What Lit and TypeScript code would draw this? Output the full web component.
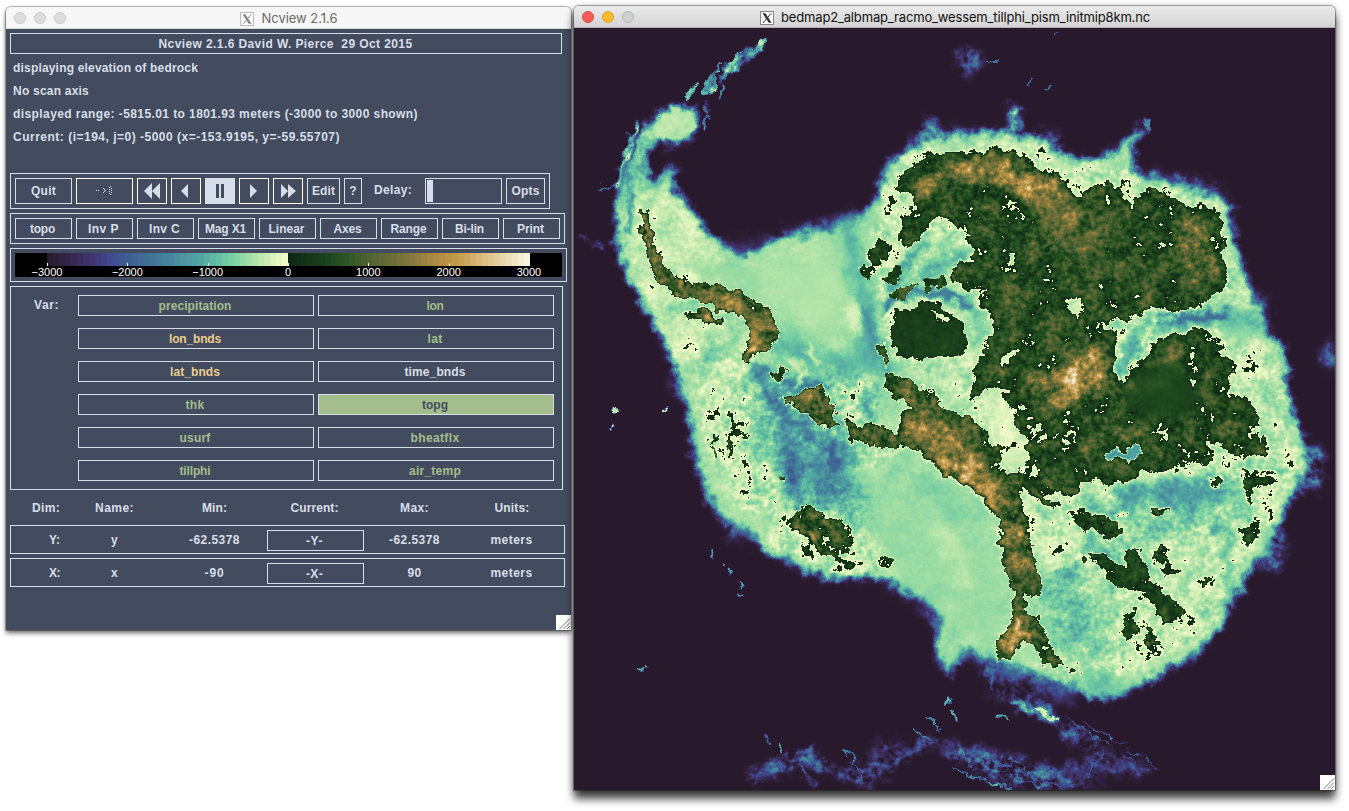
import { LitElement, html, svg, css } from "lit";
import { customElement, property } from "lit/decorators.js";

const UI_FONT = 'bold 12px "Liberation Sans"';
const pen = document.createElement("canvas").getContext("2d")!;

function spacing(text: string, width: number, font: string): number {
  pen.font = font;
  return (width - pen.measureText(text).width) / Math.max(1, text.length);
}
const label = (text: string, width: number, font = UI_FONT) =>
  html`<span class="label" style="letter-spacing:${spacing(text, width, font).toFixed(3)}px">${text}</span>`;

/* ---------- colour map: metres -> rgb ---------- */
type Stop = [number, number, number, number];
const SEA: Stop[] = [
  [-3000, 40, 26, 44], [-2700, 53, 39, 76], [-2400, 65, 56, 116], [-2200, 64, 74, 145],
  [-2000, 62, 94, 148], [-1700, 65, 115, 151], [-1400, 73, 140, 158], [-1100, 82, 166, 162],
  [-900, 96, 188, 163], [-700, 122, 208, 163], [-500, 158, 221, 164], [-300, 198, 234, 176], [0, 250, 253, 205],
];
const LAND: Stop[] = [
  [0, 13, 37, 20], [300, 23, 57, 26], [600, 34, 78, 31], [850, 62, 92, 43], [1100, 88, 102, 52],
  [1500, 128, 118, 60], [1850, 172, 140, 66], [2050, 192, 150, 70], [2350, 214, 182, 118], [3000, 249, 251, 228],
];
function colourAt(m: number): [number, number, number] {
  const stops = m < 0 ? SEA : LAND;
  for (let i = 1; i < stops.length; i++) {
    if (m <= stops[i][0] || i === stops.length - 1) {
      const a = stops[i - 1], b = stops[i];
      const t = Math.min(1, (m - a[0]) / (b[0] - a[0]));
      return [1, 2, 3].map((k) => a[k] + (b[k] - a[k]) * t) as [number, number, number];
    }
  }
  return [0, 0, 0];
}
const RAMP = Array.from({ length: 256 }, (_, i) => colourAt((i / 255) * 6000 - 3000));
const table = (k: number) => RAMP.map((c) => (c[k] / 255).toFixed(3)).join(" ");
const barGradient = (() => {
  const n = 80;
  return Array.from({ length: n }, (_, i) => {
    const c = colourAt(((i + 0.5) / n) * 6000 - 3000).map(Math.round);
    return `rgb(${c}) ${(i / n) * 100}% ${((i + 1) / n) * 100}%`;
  }).join(",");
})();

/* ---------- elevation field: red = height, green and blue = roughness ---------- */
const tone = (m: number, rough: number) => {
  const h = Math.round(((m + 3000) / 6000) * 255);
  const r = Math.round(rough * 255);
  return `rgb(${h},${r},${r})`;
};
/** [points, metres, roughness, blur] */
type Area = [string, number, number, number];
/** [path, metres, roughness, stroke width, blur] */
type Line = [string, number, number, number, number];

const SHELF =
  "655,118 668,108 682,107 696,110 697,128 688,140 672,146 655,140 646,146 645,170 655,181 672,168 675,190 690,205 700,222 718,242 740,256 762,246 785,236 830,228 855,220 872,206 880,188 886,165 905,152 930,139 960,133 1000,133 1036,136 1052,152 1078,158 1106,157 1124,142 1136,126 1142,130 1132,152 1135,172 1160,180 1190,188 1215,196 1230,206 1234,235 1242,262 1252,295 1264,325 1285,352 1288,385 1292,412 1304,440 1309,462 1298,486 1282,515 1272,545 1250,572 1236,592 1222,625 1200,652 1165,672 1140,686 1115,698 1085,698 1070,684 1045,678 1010,668 992,656 962,648 958,664 948,674 936,655 938,628 942,612 925,598 905,590 880,579 830,578 800,570 778,556 760,550 748,530 728,526 714,508 702,480 693,450 688,415 681,388 672,362 667,340 650,318 638,296 625,270 617,245 617,212 620,185 628,162 638,138";
const GRAY_SEA: Area[] = [
  ["655,118 672,109 694,112 694,128 684,139 668,142 655,134", -330, 0.1, 2],
  ["638,195 665,190 690,222 725,262 745,330 720,370 680,370 655,310 628,262 622,215", -280, 0.22, 6],
  ["740,265 830,240 855,250 850,330 820,370 780,340 770,300", -420, 0.04, 10],
  ["680,260 745,265 770,290 740,290 700,275", -500, 0.05, 5],
  ["890,165 930,145 1000,140 1040,145 1060,165 1110,165 1150,188 1215,202 1230,260 1255,315 1280,370 1295,440 1300,465 1270,520 1240,570 1215,625 1160,665 1100,680 1040,665 1060,500 1000,520 960,400 880,350 870,260", -270, 0.36, 5],
  ["985,385 1010,400 1022,440 1000,455 985,430", -170, 0.2, 3],
  ["700,380 760,380 770,470 760,520 735,500 705,430", -230, 0.42, 7],
  ["760,470 860,500 905,560 880,572 820,570 775,545", -250, 0.45, 6],
  ["845,475 930,500 990,540 1000,610 985,645 940,610 890,575 860,520", -520, 0.06, 9],
  ["925,520 960,530 975,600 950,590", -400, 0.08, 6],
  ["880,455 930,475 985,520 975,530 920,495", -620, 0.1, 5],
  ["770,380 835,365 880,390 850,470 870,520 800,510 775,470 750,400", -950, 0.5, 8],
  ["790,440 825,455 860,495 830,500 795,480", -1350, 0.4, 7],
  ["820,370 870,370 880,430 850,425 830,400", -450, 0.5, 6],
  ["845,430 900,445 880,470 850,460", -450, 0.4, 5],
  ["700,345 790,345 770,375 700,390", -400, 0.3, 7],
  ["1070,510 1150,480 1240,475 1250,520 1200,540 1120,545 1080,530", -650, 0.4, 8],
  ["1105,495 1170,480 1235,480 1230,505 1150,510", -1100, 0.3, 6],
  ["1050,560 1085,560 1110,640 1085,665 1050,640 1035,600", -780, 0.35, 8],
  ["1170,540 1230,540 1210,600 1180,620 1140,570", -350, 0.3, 6],
  ["1220,300 1250,305 1262,335 1240,345 1215,330", -560, 0.1, 4],
  ["1080,675 1110,670 1120,690 1090,694", -850, 0.1, 5],
  ["925,240 975,235 985,300 1000,320 990,360 960,390 925,380 960,310 930,280", -330, 0.25, 5],
  ["930,255 965,250 960,272 925,278", -800, 0.2, 5],
  ["968,300 992,310 985,350 972,345", -750, 0.2, 5],
  ["1255,370 1280,385 1290,450 1270,470 1255,430", -420, 0.3, 5],
];
const CHANNELS: Line[] = [
  ["M848 225 C852 270 868 290 868 330 S880 355 890 372", -950, 0.1, 18, 6],
  ["M866 310 C870 335 872 345 884 362", -1500, 0.1, 9, 4],
  ["M780 340 C810 365 840 370 872 355", -950, 0.15, 26, 8],
  ["M885 308 C905 288 940 285 968 306", -1750, 0.1, 7, 2.5],
  ["M890 290 C900 270 915 255 925 240", -1300, 0.2, 7, 3],
  ["M900 285 C925 272 940 270 965 255", -1100, 0.2, 6, 3],
  ["M752 366 C775 375 790 388 820 385", -1700, 0.4, 7, 3],
  ["M760 375 C770 395 790 410 788 440 S800 480 795 500", -1800, 0.4, 8, 5],
  ["M826 446 L838 464", -2500, 0.1, 6, 3],
  ["M785 430 C805 425 830 440 850 460", -1500, 0.4, 7, 4],
  ["M1252 318 C1215 312 1190 322 1165 322 S1140 345 1122 370", -900, 0.2, 12, 4],
  ["M1225 315 C1200 320 1185 315 1160 320", -1900, 0.15, 6, 2],
  ["M1110 325 C1130 330 1145 320 1175 318", -600, 0.4, 6, 1],
  ["M1140 345 L1155 318", -600, 0.5, 8, 2],
  ["M1107 453 C1120 458 1128 455 1138 449", -1200, 0.1, 6, 1],
  ["M1120 540 C1140 555 1150 580 1165 610", -900, 0.3, 6, 3],
  ["M1090 540 C1120 555 1110 590 1112 620", -1000, 0.3, 6, 4],
  ["M1228 545 C1222 570 1235 585 1225 605", -1100, 0.2, 5, 3],
  ["M630 165 C628 190 630 210 630 228", -1500, 0.2, 5, 2],
  ["M648 135 C642 155 638 170 642 185", -800, 0.4, 10, 3],
  ["M672 170 C663 180 656 184 648 188", -900, 0.2, 7, 3],
  ["M752 410 C760 440 755 460 756 500", -900, 0.3, 5, 3],
  ["M670 308 C700 305 735 308 735 330 S720 350 700 360", -750, 0.2, 6, 3],
  ["M960 450 L985 520", -600, 0.1, 4, 2],
  ["M1003 536 L1009 522", -2000, 0.1, 3, 1],
  ["M1080 548 C1090 546 1105 556 1120 560", -1000, 0.3, 5, 2],
  ["M808 345 L818 360", -80, 0.1, 6, 2.5],
  ["M790 358 L798 366", -100, 0.1, 8, 3],
  ["M795 385 C800 380 804 376 806 374", -100, 0.1, 6, 2],
  ["M850 305 L858 330", -100, 0.1, 10, 4],
  ["M825 345 L845 342", -380, 0.1, 10, 5],
];
const BASINS: Area[] = [
  ["1240,290 1268,300 1262,330 1250,310", -1800, 0.9, 5],
  ["1324,345 1336,340 1336,372 1322,362", -1900, 0.8, 4],
  ["1290,445 1325,450 1318,490 1296,490 1306,465", -2000, 1, 5],
  ["1262,530 1285,535 1280,570 1262,565", -2000, 1, 5],
  ["958,54 972,48 983,60 968,76", -2000, 1, 4],
  ["1012,104 1018,104 1024,134 1006,134", -1500, 1, 3],
  ["1144,122 1151,120 1150,129 1145,130", -1300, 0.2, 1],
  ["912,134 930,118 945,132 1050,132 1060,142 1050,148 910,150", -1900, 1, 4],
  ["1040,140 1062,142 1064,158 1050,156", -1700, 1, 3],
  ["1140,172 1180,176 1215,184 1228,200 1180,190", -1800, 1, 4],
  ["1015,668 1070,684 1072,702 1040,690 990,672 960,645 975,640", -1800, 0.4, 6],
  ["952,640 972,648 972,660 952,662", -2000, 0.3, 4],
  ["985,665 1040,690 1060,715 1020,708 990,695", -2500, 0.6, 5],
  ["722,522 752,530 756,544 728,534", -2100, 0.5, 4],
  ["672,370 683,392 682,400 672,384", -1900, 0.4, 4],
  ["925,592 945,600 944,640 930,612", -1600, 0.4, 5],
  ["715,236 735,252 765,242 765,236 735,246", -2100, 0.2, 4],
  ["775,233 825,222 860,212 860,220 820,234", -1900, 0.2, 4],
  ["685,95 697,84 696,92 686,103", -1000, 0.6, 0.6],
  ["703,78 720,66 715,92 706,94", -950, 0.8, 0.6],
  ["724,64 768,37 768,46 750,60 736,70 722,80", -1600, 1, 1],
  ["728,60 738,54 734,64", -900, 0.4, 0.6],
  ["758,42 769,37 768,44 760,46", -650, 0.4, 0.6],
  ["745,775 790,752 812,750 838,768 868,764 885,745 905,745 932,735 938,742 900,762 880,780 862,788 835,772 805,765 770,776 760,782", -2400, 0.9, 3],
  ["870,762 875,742 900,742 920,738 900,765", -2600, 0.6, 4],
  ["940,742 990,752 1040,765 1105,788 1030,788 985,775 950,755", -2200, 1, 5],
  ["1065,765 1104,750 1150,768 1140,780 1105,770 1085,788", -2450, 0.5, 3],
  ["1010,702 1045,704 1058,722 1050,722 1025,712", -1600, 1, 2],
  ["1058,716 1100,742 1104,758 1060,742", -2450, 0.8, 3],
];
const STREAKS: Line[] = [
  ["M1036 706 L1056 720", -400, 0.3, 3, 0.6],
  ["M1010 704 L1028 706", -1000, 0.6, 3, 1],
  ["M986 668 L994 686", -1800, 0.3, 4, 1],
  ["M636 125 C628 145 624 160 618 185", -700, 0.7, 5, 1],
  ["M600 190 Q607 186 615 185", -1700, 0.3, 2, 0.6],
  ["M708 102 V118 M724 84 L720 98 M706 118 V132", -1800, 0.8, 3, 0.6],
  ["M1064 717 L1135 762 M1085 722 L1158 768", -2300, 0.8, 2, 0.6],
  ["M1103 752 L1085 776", -2000, 0.3, 2, 0.6],
  ["M842 748 L862 776 M915 726 L930 744 M928 720 L940 730 M765 734 L771 745", -1700, 0.5, 2, 0.6],
  ["M754 775 L795 756 L812 750 M880 775 L900 758 L935 740 M797 762 L814 786", -2100, 0.6, 3, 1],
  ["M614 411 L619 412 M663 411 L666 411 M611 426 L612 426", -300, 0, 3, 0.6],
  ["M712 550 V556 M725 566 V568 M731 572 V574 M741 583 L742 584 M739 593 L740 593", -1300, 0, 3, 0.6],
  ["M952 710 L954 716 M948 699 L949 701 M1000 718 L1005 721 M781 749 V751 M640 669 H642", -1000, 0, 3, 0.6],
  ["M985 61 H996 M1046 87 H1050 M1056 34 H1057 M1028 86 L1034 83", -1700, 0, 2, 0.4],
  ["M580 234 L590 244 M596 246 H602", -2300, 0.6, 4, 1],
  ["M955 770 L1010 788 M975 760 L1040 788 M1000 765 L1060 788 M960 750 L975 768 M1010 758 L1030 775", -1700, 0.8, 2, 0.6],
];
const PLATEAU: Area[] = [
  ["895,190 904,172 923,158 950,153 975,156 1000,150 1018,156 1036,168 1062,182 1074,198 1090,192 1106,182 1124,190 1132,212 1136,196 1148,187 1172,194 1184,208 1200,204 1218,214 1224,230 1222,258 1230,285 1208,298 1196,308 1172,312 1150,308 1130,318 1110,322 1120,345 1116,370 1124,384 1132,362 1150,352 1158,340 1178,330 1205,330 1220,345 1228,362 1230,392 1252,402 1260,430 1268,456 1244,454 1218,448 1206,462 1170,464 1140,474 1118,484 1082,480 1074,495 1040,486 1028,500 1012,490 1016,455 1030,440 1016,425 1010,402 985,388 968,402 974,372 988,345 996,318 990,296 968,290 952,280 958,262 975,258 972,240 955,222 940,215 915,240 905,250 898,238 908,215 920,200", 500, 0.62, 1.5],
  ["884,372 905,378 930,390 946,408 974,420 1000,450 1012,470 1036,490 1060,510 1074,525 1048,530 1030,515 1034,560 1046,585 1036,598 1026,592 1022,608 1036,618 1050,645 1068,670 1052,668 1038,652 1024,640 1016,655 996,660 998,642 1012,620 1014,596 1004,570 1002,530 994,508 975,490 940,466 915,448 880,446 858,432 872,422 905,440 912,405 885,390", 800, 0.75, 1.2],
  ["640,208 648,212 652,245 664,268 684,286 704,282 740,292 762,304 776,322 778,340 768,350 750,356 748,366 744,356 752,340 742,316 712,306 690,298 668,288 652,268 645,240", 1250, 0.8, 1],
  ["681,312 700,311 724,318 722,324 700,318 684,320", 900, 0.8, 1],
  ["890,326 898,312 925,301 944,304 948,314 964,322 970,342 958,356 930,358 905,356 893,346", 380, 0.15, 1.2],
  ["874,342 882,340 890,360 884,366", 900, 0.5, 1],
  ["865,268 870,250 886,236 890,248 884,264 868,278", 350, 0.4, 1],
  ["862,266 872,268 868,282 860,276", 350, 0.4, 0.6],
  ["884,280 900,264 904,272 888,286", 500, 0.4, 0.6],
  ["888,298 906,284 918,286 902,300", 700, 0.4, 0.6],
  ["918,280 940,277 944,286 928,289", 500, 0.4, 0.6],
  ["772,374 782,368 787,378 776,384", 400, 0.5, 1],
  ["780,396 800,394 822,384 826,392 832,400 840,426 820,424 800,412", 900, 0.8, 1],
  ["845,413 856,424 872,436 872,446 850,440", 600, 0.8, 1],
  ["728,408 734,410 736,422 730,428", 300, 0.8, 1],
  ["713,436 716,436 716,458 713,456", 300, 0.6, 0.6],
  ["727,444 731,444 730,458 727,458", 300, 0.6, 0.6],
  ["742,432 750,434 746,444", 300, 0.8, 0.6],
  ["780,476 785,478 782,484", 900, 0.8, 0.6],
  ["792,514 808,506 822,510 820,522 840,520 850,528 850,552 836,562 815,548 808,534 794,530", 650, 0.8, 1],
  ["876,558 890,556 894,562 880,566", 300, 0.6, 1],
  ["1068,508 1100,515 1118,522 1118,540 1095,532 1072,520", 350, 0.5, 1.2],
  ["1090,550 1112,560 1128,570 1126,550 1138,548 1146,572 1165,590 1184,612 1178,622 1162,620 1148,598 1130,592 1112,580 1096,562", 430, 0.4, 1],
  ["1128,612 1136,608 1136,640 1128,644 1122,630", 450, 0.5, 1],
  ["1140,622 1156,636 1166,646 1150,646", 180, 1, 1],
  ["1072,548 1084,552 1086,566 1078,560", 250, 0.6, 1],
  ["1158,542 1164,556 1180,572 1165,576 1150,568", 250, 0.7, 1],
  ["1238,470 1262,468 1278,472 1268,484 1250,490 1254,504 1244,502 1246,486", 350, 0.5, 1],
  ["1240,528 1258,522 1260,534 1248,545", 250, 0.5, 1],
  ["1192,580 1204,578 1200,590 1214,574", 200, 0.8, 1],
  ["1150,508 1172,508 1164,516 1154,518", 250, 0.6, 1],
  ["1115,512 1130,512 1126,522", 200, 0.6, 1],
  ["1206,482 1220,474 1224,486 1214,490", 200, 0.6, 1],
  ["1050,665 1082,668 1084,674 1060,672", 250, 1, 1],
];
const RELIEF: Area[] = [
  ["950,162 1000,156 1030,168 1058,182 1068,200 1044,214 1018,190 970,178 940,176 915,196", 1750, 0.8, 6],
  ["1030,190 1080,205 1090,240 1065,262 1045,235", 1250, 0.6, 9],
  ["1094,200 1120,215 1116,255 1080,280 1070,250", 1050, 0.6, 8],
  ["1166,215 1210,220 1215,270 1195,290 1180,260", 1150, 0.8, 7],
  ["1080,245 1160,250 1165,290 1110,300 1080,285", 750, 0.6, 9],
  ["1030,366 1060,372 1090,345 1112,360 1110,385 1085,395 1062,410 1040,392", 1850, 0.8, 5],
  ["975,270 1030,290 1020,340 990,380 995,320", 750, 0.55, 7],
  ["1045,310 1085,315 1090,340 1040,345", 900, 0.6, 8],
  ["1092,425 1140,418 1150,440 1100,445", 950, 0.7, 7],
  ["1155,350 1185,340 1188,360 1150,370", 1050, 0.6, 6],
  ["1132,372 1175,362 1200,385 1190,415 1150,422 1128,402", 480, 0.06, 7],
  ["1140,378 1170,372 1172,388 1146,392", 680, 0.05, 5],
  ["905,412 945,420 980,448 1000,475 1010,505 1000,512 970,480 930,455 900,440", 1400, 0.8, 5],
  ["925,455 960,462 990,490 998,505 970,486", 2150, 0.8, 3],
  ["930,400 945,410 960,425 940,420", 500, 0.4, 4],
  ["1005,512 1028,540 1030,575 1010,570 1004,540", 1500, 0.8, 4],
  ["1018,615 1030,630 1010,655 1000,645", 2000, 0.9, 3],
  ["700,288 735,298 760,315 770,340 755,342 745,315", 1500, 0.7, 3],
  ["920,178 945,170 935,186 914,205", 1800, 0.7, 3],
  ["795,396 820,388 815,400", 1800, 0.8, 2],
  ["805,514 820,512 815,522", 1900, 0.5, 2],
  ["835,535 845,545 835,550", 1300, 0.5, 2],
];
const INLETS: Area[] = [
  ["1068,302 1080,294 1084,310 1078,322 1070,314", -180, 0.3, 1],
  ["998,365 1016,346 1018,352 1002,370", -200, 0.1, 1],
  ["1000,455 1020,446 1032,450 1028,462 1008,474 1000,468", -280, 0.1, 1],
  ["1030,470 1036,462 1040,470 1036,480", -150, 0.2, 1],
  ["1035,440 1060,432 1060,436 1042,446", -150, 0.3, 1],
  ["1108,452 1122,456 1138,446 1142,452 1130,460 1110,458", -950, 0.2, 1],
  ["1190,378 1198,380 1194,390", -150, 0.3, 1],
  ["928,306 938,314 950,318 948,322 934,320", -250, 0.1, 1],
  ["985,388 1000,390 1014,408 1018,428 1012,445 998,448 990,430", -170, 0.15, 1],
  ["1018,488 1026,486 1046,505 1076,512 1080,560 1050,575 1035,545 1022,520", -270, 0.3, 2],
];

const polys = (list: Area[]) =>
  list.map(([p, m, r, b]) => svg`<polygon points=${p} fill=${tone(m, r)} filter=${`url(#b${String(b).replace(".", "_")})`}></polygon>`);
const lines = (list: Line[]) =>
  list.map(([d, m, r, w, b]) => svg`<path d=${d} fill="none" stroke-linecap="round" stroke-width=${w} stroke=${tone(m, r)} filter=${`url(#b${String(b).replace(".", "_")})`}></path>`);
const BLURS = [...new Set([GRAY_SEA, BASINS, PLATEAU, RELIEF, INLETS].flatMap((l) => l.map((a) => a[3]))
  .concat([CHANNELS, STREAKS].flatMap((l) => l.map((a) => a[4]))))];

const xIcon = (ink: string, edge: string) => html`<svg class="xicon" width="14" height="14" viewBox="0 0 14 14">
  <rect x=".5" y=".5" width="13" height="13" fill="#fff" stroke=${edge}></rect>
  <path d="M2.5 2.2H5.4L11.6 11.8H8.7Z" fill=${ink}></path>
  <path d="M11.2 2.2L7.6 6.6M6.3 8L3 11.9" stroke=${ink} stroke-width="1" fill="none"></path></svg>`;
const grip = html`<svg class="grip" width="15" height="15" viewBox="0 0 15 15">
  <rect width="15" height="15" fill="#fff"></rect>
  <path d="M3.5 14L14 3.5M7.5 14L14 7.5M11 14L14 11" stroke="#777" stroke-width="1" fill="none"></path></svg>`;

@customElement("bedrock-map")
class BedrockMap extends LitElement {
  static styles = css`
    :host { display: block; width: 761px; height: 762px; background: #281a2c; }
    svg { display: block; }
  `;
  render() {
    return html`<svg width="761" height="762" viewBox="574 28 761 762">
      <defs>
        ${BLURS.map((b) => svg`<filter id=${`b${String(b).replace(".", "_")}`} filterUnits="userSpaceOnUse" x="560" y="20" width="790" height="780" color-interpolation-filters="sRGB"><feGaussianBlur stdDeviation=${b}></feGaussianBlur></filter>`)}
        <filter id="relief" filterUnits="userSpaceOnUse" x="574" y="28" width="761" height="762" color-interpolation-filters="sRGB">
          <feTurbulence type="fractalNoise" baseFrequency="0.08" numOctaves="5" seed="7" result="t1"></feTurbulence>
          <feColorMatrix in="t1" type="matrix" values="1 0 0 0 0  0 1 0 0 0  0 0 1 0 0  0 0 0 0 1" result="warp"></feColorMatrix>
          <feDisplacementMap in="SourceGraphic" in2="warp" scale="15" xChannelSelector="R" yChannelSelector="G" result="field"></feDisplacementMap>
          <feTurbulence type="fractalNoise" baseFrequency="0.05" numOctaves="5" seed="21" result="t2"></feTurbulence>
          <feColorMatrix in="t2" type="matrix" values="0 0 0 0 1  .5 .5 0 0 0  0 0 0 0 1  0 0 0 0 1" result="n1"></feColorMatrix>
          <feTurbulence type="fractalNoise" baseFrequency="0.19" numOctaves="3" seed="4" result="t3"></feTurbulence>
          <feColorMatrix in="t3" type="matrix" values="0 0 0 0 1  0 1 0 0 0  0 0 0 0 1  0 0 0 0 1" result="n2"></feColorMatrix>
          <feComposite in="n1" in2="n2" operator="arithmetic" k1="0" k2=".66" k3=".34" k4="0" result="noise"></feComposite>
          <feComposite in="field" in2="noise" operator="arithmetic" k1="1" k2="0" k3="0" k4="0" result="mix"></feComposite>
          <feColorMatrix in="mix" type="matrix" values="1 1.15 -.575 0 0  1 1.15 -.575 0 0  1 1.15 -.575 0 0  0 0 0 0 1"></feColorMatrix>
          <feComponentTransfer>
            <feFuncR type="discrete" tableValues=${table(0)}></feFuncR>
            <feFuncG type="discrete" tableValues=${table(1)}></feFuncG>
            <feFuncB type="discrete" tableValues=${table(2)}></feFuncB>
          </feComponentTransfer>
        </filter>
      </defs>
      <g filter="url(#relief)">
        <rect x="560" y="20" width="790" height="780" fill="#000"></rect>
        ${polys(BASINS)}
        <polygon points=${SHELF} fill=${tone(-470, 0.12)} filter="url(#b3)"></polygon>
        ${polys(GRAY_SEA)} ${lines(CHANNELS)} ${lines(STREAKS)}
        ${polys(PLATEAU)} ${polys(RELIEF)} ${polys(INLETS)}
        ${lines(CHANNELS.slice(10, 15))}
      </g>
    </svg>`;
  }
}

@customElement("x-window")
class XWindow extends LitElement {
  @property({ type: Boolean, reflect: true }) active = false;
  @property() heading = "";
  @property({ type: Number }) span = 0;
  static styles = css`
    :host { display: flex; flex-direction: column; border-radius: 5px 5px 0 0; overflow: hidden; position: relative; }
    .bar { display: grid; grid-template-columns: 70px 1fr 70px; align-items: center; height: 22px; box-sizing: border-box;
      border-bottom: 1px solid #d6ddd8; background: #f6f6f6; color: #6a6a6a; }
    :host([active]) .bar { background: linear-gradient(#ebebeb, #d3d3d3); border-bottom-color: #b5b0b5; color: #111; }
    .lights { display: flex; gap: 8px; padding-left: 8px; }
    .light { width: 12px; height: 12px; border-radius: 50%; background: #dcdcdc; border: 1px solid #cacaca; box-sizing: border-box; }
    :host([active]) .red { background: #fc5b57; border-color: #df4744; }
    :host([active]) .amber { background: #fdbb2e; border-color: #dfa023; }
    :host([active]) .gray { background: #cfd0cf; border-color: #a3bea5; }
    .title { display: flex; align-items: center; justify-content: center; gap: 7px; font: 13px Inter, Roboto, sans-serif; white-space: nowrap; padding-left: 1px; }
    .xicon { margin-top: 2px; }
    .grip { position: absolute; right: 0; bottom: 0; display: block; }
  `;
  render() {
    return html`<div class="bar">
        <div class="lights"><i class="light red"></i><i class="light amber"></i><i class="light gray"></i></div>
        <div class="title">${this.active ? xIcon("#333", "#888") : xIcon("#888", "#bbb")}${label(this.heading, this.span, "13px Inter")}</div>
      </div>
      <slot></slot>${grip}`;
  }
}

const W = "#d8dee9";
const arrows = {
  rw: svg`<path d="M7 13L15 5V21ZM15 13L23 5V21Z"></path>`,
  back: svg`<path d="M10 13L17 6V20Z"></path>`,
  pause: svg`<path fill="#434c5e" d="M11 6H14V20H11ZM16 6H19V20H16Z"></path>`,
  play: svg`<path d="M11 6V20L18 13Z"></path>`,
  ff: svg`<path d="M8 6V20L15 13ZM15 6V20L23 13Z"></path>`,
};
const OPTIONS: [string, number][] = [["topo", 25], ["Inv P", 31], ["Inv C", 31], ["Mag X1", 41], ["Linear", 36], ["Axes", 28], ["Range", 36], ["Bi-lin", 29], ["Print", 27]];
const VARS: [string, number, string][] = [
  ["precipitation", 73, "g"], ["lon", 17, "g"], ["lon_bnds", 52, "y"], ["lat", 15, "g"], ["lat_bnds", 50, "y"], ["time_bnds", 61, ""],
  ["thk", 19, "g"], ["topg", 26, "sel"], ["usurf", 31, "g"], ["bheatflx", 49, "g"], ["tillphi", 31, "g"], ["air_temp", 52, "g"],
];
const ROWS: [string, number][][] = [
  [["Y:", 11], ["y", 7], ["-62.5378", 51], ["-Y-", 17], ["-62.5378", 51], ["meters", 42]],
  [["X:", 11], ["x", 7], ["-90", 20], ["-X-", 17], ["90", 14], ["meters", 42]],
];

@customElement("app-root")
class AppRoot extends LitElement {
  static styles = css`
    :host { display: block; position: relative; width: 1349px; height: 811px; overflow: hidden; background: #fff; }
    .control { position: absolute; left: 6px; top: 7px; width: 565px; height: 623px;
      box-shadow: 0 0 1px 1px rgba(0,0,0,.3), 0 3px 5px rgba(0,0,0,.6); }
    .mapwin { position: absolute; left: 574px; top: 6px; width: 761px; height: 784px;
      box-shadow: 0 0 1px 1px rgba(0,0,0,.35), 0 9px 9px rgba(0,0,0,.7), 0 2px 8px rgba(0,0,0,.35); }
    .label { white-space: pre; display: inline-block; transform: translate(-1px, 1px); }
    .panel { height: 601px; box-sizing: border-box; padding: 4px 4px 0; background: #434c5e; color: #d8dee9;
      font: bold 12px/21px "Liberation Sans", Arial, sans-serif; }
    .box, .btn { border: 1px solid #d8dee9; box-sizing: border-box; }
    .btn { display: flex; align-items: center; justify-content: center; height: 21px; line-height: 19px; flex: none; }
    .banner { width: 552px; height: 21px; line-height: 19px; text-align: center; padding-left: 1px; }
    .info { padding: 2px 0 0 4px; height: 119px; box-sizing: border-box; line-height: 23px; }
    .controls { width: 540px; height: 36px; display: flex; gap: 4px; padding: 4px; }
    .controls .btn { height: 26px; line-height: 22px; }
    .controls .btn .label { transform: translate(0, 0); }
    .w57 { width: 57px; } .w30 { width: 30px; } .w33 { width: 33px; } .w18 { width: 18px; } .w39 { width: 39px; }
    .controls .lit { border-color: #fff; }
    .controls .on { background: #d8dee9; }
    .btn svg { flex: none; }
    .delay { width: 55px; box-sizing: border-box; padding-left: 9px; line-height: 23px; }
    .field { width: 77px; height: 26px; padding: 1px; }
    .caret { width: 6px; height: 22px; background: #d8dee9; }
    .options { width: 555px; height: 31px; margin-top: 4px; display: flex; gap: 4px; padding: 4px; }
    .scale { width: 557px; height: 34px; margin-top: 4px; padding: 4px; }
    .strip { width: 547px; height: 24px; background: #000; padding: 0 32px; box-sizing: border-box; }
    .ramp { height: 13px; display: flex; justify-content: space-between; align-items: flex-end; }
    .tick { width: 1px; height: 3px; background: #fff; }
    .nums { display: flex; justify-content: space-between; margin: 0 -17px 0 -18px; font: 11px/12px "Liberation Sans", Arial, sans-serif; color: #fff; }
    .num { width: 36px; text-align: center; }
    .vars { width: 553px; height: 204px; margin-top: 4px; display: flex; padding: 8px 8px 0 0; }
    .cap { width: 67px; box-sizing: border-box; padding-left: 24px; line-height: 19px; }
    .grid { display: grid; grid-template-columns: 236px 236px; column-gap: 4px; row-gap: 12px; align-content: start; }
    .g { color: #a3be8c; } .y { color: #ebcb8b; }
    .sel { background: #a3be8c; color: #434c5e; }
    .dims { display: grid; grid-template-columns: 51px 109px 91px 109px 91px 104px; text-align: center; align-items: center; height: 35px; }
    .dims :first-child { text-align: right; }
    .row { display: grid; grid-template-columns: 50px 109px 91px 109px 91px 103px; width: 555px; height: 29px; margin-bottom: 4px; text-align: center; line-height: 27px; }
    .row :first-child { text-align: right; }
    .row .btn { width: 97px; margin: 4px 6px; line-height: 19px; }
  `;
  render() {
    const ctl = (g: unknown, cls = "lit") => html`<div class="btn w30 ${cls}"><svg width="30" height="26" viewBox="0 0 30 26" fill=${W}>${g}</svg></div>`;
    return html`
      <x-window class="control" heading="Ncview 2.1.6" .span=${76}>
        <div class="panel">
          <div class="box banner">${label("Ncview 2.1.6 David W. Pierce  29 Oct 2015", 254)}</div>
          <div class="info">
            <div>${label("displaying elevation of bedrock", 185)}</div>
            <div>${label("No scan axis", 76)}</div>
            <div>${label("displayed range: -5815.01 to 1801.93 meters (-3000 to 3000 shown)", 405)}</div>
            <div>${label("Current: (i=194, j=0) -5000 (x=-153.9195, y=-59.55707)", 327)}</div>
          </div>
          <div class="box controls">
            <div class="btn w57">${label("Quit", 25)}</div>
            <div class="btn w57 lit"><svg width="20" height="12" viewBox="0 0 20 12" fill=${W}>
              <path d="M1 5H2V6H1ZM3 5H4V6H3ZM8 3H9V4H8ZM9 4H10V5H9ZM10 5H11V6H10ZM9 6H10V7H9ZM8 7H9V8H8ZM15 1H16V2H15ZM14 2H15V3H14ZM16 3H17V4H16ZM14 4H15V5H14ZM16 5H17V6H16ZM14 6H15V7H14ZM16 7H17V8H16ZM14 8H15V9H14ZM15 9H16V10H15Z"></path></svg></div>
            ${ctl(arrows.rw)}${ctl(arrows.back)}${ctl(arrows.pause, "on")}${ctl(arrows.play)}${ctl(arrows.ff)}
            <div class="btn w33">${label("Edit", 23)}</div>
            <div class="btn w18">?</div>
            <div class="delay">${label("Delay:", 38)}</div>
            <div class="box field"><div class="caret"></div></div>
            <div class="btn w39">${label("Opts", 28)}</div>
          </div>
          <div class="box options">${OPTIONS.map(([t, w]) => html`<div class="btn w57">${label(t, w)}</div>`)}</div>
          <div class="box scale"><div class="strip">
            <div class="ramp" style="background:linear-gradient(90deg,${barGradient})">${Array.from({ length: 7 }, () => html`<i class="tick"></i>`)}</div>
            <div class="nums">${["−3000", "−2000", "−1000", "0", "1000", "2000", "3000"].map((n) => html`<span class="num">${n}</span>`)}</div>
          </div></div>
          <div class="box vars">
            <div class="cap">${label("Var:", 25)}</div>
            <div class="grid">${VARS.map(([t, w, c]) => html`<div class="btn ${c}">${label(t, w)}</div>`)}</div>
          </div>
          <div class="dims">${([["Dim:", 28], ["Name:", 39], ["Min:", 25], ["Current:", 48], ["Max:", 29], ["Units:", 35]] as [string, number][]).map(([t, w]) => html`<div>${label(t, w)}</div>`)}</div>
          ${ROWS.map((r) => html`<div class="box row">${r.map(([t, w], i) => html`<div class=${i === 3 ? "btn" : ""}>${label(t, w)}</div>`)}</div>`)}
        </div>
      </x-window>
      <x-window class="mapwin" active heading="bedmap2_albmap_racmo_wessem_tillphi_pism_initmip8km.nc" .span=${369}>
        <bedrock-map></bedrock-map>
      </x-window>`;
  }
}
